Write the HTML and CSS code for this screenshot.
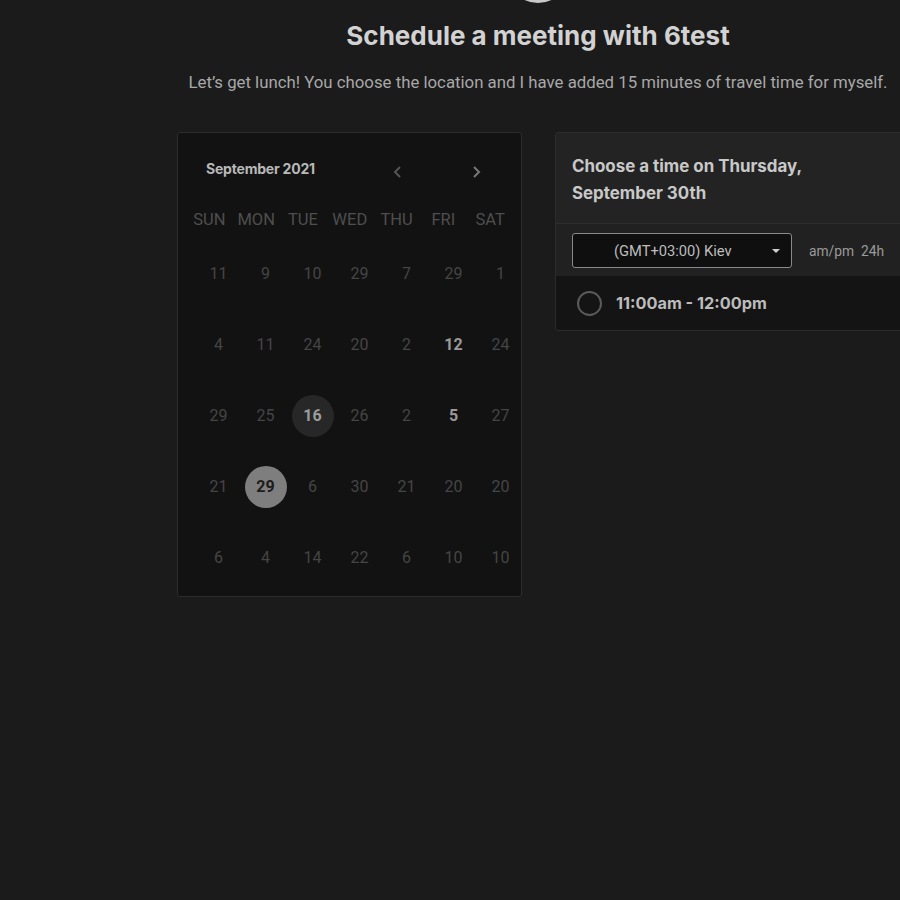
FILE: index.html
```html
<!DOCTYPE html>
<html lang="en">
<head>
<meta charset="utf-8">
<title>Schedule a meeting</title>
<link rel="stylesheet" href="styles.css">
</head>
<body>
<div class="page">
  <div class="avatar"></div>
  <h1 class="title">Schedule a meeting with 6test</h1>
  <p class="subtitle">Let’s get lunch! You choose the location and I have added 15 minutes of travel time for myself.</p>
  <div class="main">
    <div class="calendar">
      <div class="cal-head">
        <span class="month">September 2021</span>
        <div class="navs">
          <svg class="nav" width="12" height="16" viewBox="0 0 12 16"><path d="M8 3 L3 8 L8 13" fill="none" stroke="#555" stroke-width="2"/></svg>
          <svg class="nav" width="12" height="16" viewBox="0 0 12 16"><path d="M4 3 L9 8 L4 13" fill="none" stroke="#777" stroke-width="2"/></svg>
        </div>
      </div>
      <div class="weekdays">
        <span>SUN</span><span>MON</span><span>TUE</span><span>WED</span><span>THU</span><span>FRI</span><span>SAT</span>
      </div>
      <div class="days">
        <span class="d">11</span><span class="d">9</span><span class="d">10</span><span class="d">29</span><span class="d">7</span><span class="d">29</span><span class="d">1</span>
        <span class="d">4</span><span class="d">11</span><span class="d">24</span><span class="d">20</span><span class="d">2</span><span class="d"><b class="avail">12</b></span><span class="d">24</span>
        <span class="d">29</span><span class="d">25</span><span class="d"><b class="today">16</b></span><span class="d">26</span><span class="d">2</span><span class="d"><b class="avail">5</b></span><span class="d">27</span>
        <span class="d">21</span><span class="d"><b class="sel">29</b></span><span class="d">6</span><span class="d">30</span><span class="d">21</span><span class="d">20</span><span class="d">20</span>
        <span class="d">6</span><span class="d">4</span><span class="d">14</span><span class="d">22</span><span class="d">6</span><span class="d">10</span><span class="d">10</span>
      </div>
    </div>
    <div class="panel">
      <div class="panel-head">Choose a time on Thursday,<br>September 30th</div>
      <div class="options">
        <div class="select">
          <span class="tz">(GMT+03:00) Kiev</span>
          <span class="caret"></span>
        </div>
        <span class="fmt">am/pm&nbsp; 24h</span>
      </div>
      <div class="slot">
        <span class="radio"></span>
        <span class="slot-text">11:00am - 12:00pm</span>
      </div>
    </div>
  </div>
</div>
</body>
</html>
```
FILE: styles.css
```css
html, body {
  margin: 0;
  padding: 0;
  background: #1b1b1b;
  overflow: hidden;
  height: 900px;
}
.page {
  width: 722px;
  margin-left: 177px;
  display: flex;
  flex-direction: column;
  align-items: center;
}
.avatar {
  width: 62px;
  height: 62px;
  border-radius: 50%;
  background: #3a3a3a;
  border: 3px solid #c8c8c8;
  box-sizing: border-box;
  margin-top: -59px;
}
.title {
  margin: 17px 0 0;
  font-family: Inter, "Liberation Sans", sans-serif;
  font-weight: 700;
  font-size: 26px;
  line-height: 32px;
  color: #d2d2d2;
}
.subtitle {
  margin: 20px 0 0;
  font-family: Roboto, "Liberation Sans", sans-serif;
  font-size: 16.8px;
  line-height: 20px;
  color: #a8a8a8;
  white-space: nowrap;
}
.main {
  align-self: stretch;
  display: flex;
  gap: 33px;
  margin-top: 40px;
  align-items: flex-start;
}
.calendar {
  width: 345px;
  height: 465px;
  box-sizing: border-box;
  background: #121212;
  border: 1px solid #2c2c2c;
  border-radius: 3px;
  flex-shrink: 0;
  overflow: hidden;
}
.cal-head {
  display: flex;
  align-items: center;
  padding: 23px 0 0 28px;
  height: 24px;
}
.month {
  font-family: Inter, "Liberation Sans", sans-serif;
  font-weight: 700;
  font-size: 14px;
  color: #b8b8b8;
  letter-spacing: -0.2px;
}
.navs {
  display: flex;
  gap: 66px;
  margin-left: 77px;
  margin-top: 8px;
}
.weekdays {
  display: grid;
  grid-template-columns: repeat(7, 46.8px);
  margin: 29px 0 0 8px;
  font-family: Roboto, "Liberation Sans", sans-serif;
  font-size: 16.5px;
  color: #4e4e4e;
  text-align: center;
  line-height: 22px;
}
.days {
  display: grid;
  grid-template-columns: repeat(7, 47px);
  grid-auto-rows: 71px;
  margin: 32px 0 0 17px;
  font-family: Roboto, "Liberation Sans", sans-serif;
  font-size: 16px;
  color: #454545;
}
.d {
  display: flex;
  align-items: flex-start;
  justify-content: center;
  line-height: 22px;
}
.d b {
  display: flex;
  align-items: center;
  justify-content: center;
  width: 42px;
  height: 42px;
  margin-top: -10px;
  border-radius: 50%;
  font-weight: 700;
  flex-shrink: 0;
}
.avail {
  color: #9a9a9a;
}
.today {
  background: #272727;
  color: #9c9c9c;
}
.sel {
  background: #7e7e7e;
  color: #1c1c1c;
}
.panel {
  width: 360px;
  flex-shrink: 0;
  box-sizing: border-box;
  background: #212121;
  border: 1px solid #2c2c2c;
  border-radius: 3px;
  overflow: hidden;
}
.panel-head {
  background: #232323;
  padding: 20px 16px 16px;
  font-family: Inter, "Liberation Sans", sans-serif;
  font-weight: 700;
  font-size: 16.9px;
  line-height: 27px;
  color: #c8c8c8;
  border-bottom: 1px solid #2e2e2e;
}
.options {
  display: flex;
  align-items: center;
  padding: 9px 16px 8px;
  background: #212121;
}
.select {
  width: 220px;
  height: 35px;
  box-sizing: border-box;
  border: 1px solid #8a8a8a;
  border-radius: 3px;
  background: #0f0f0f;
  display: flex;
  align-items: center;
  position: relative;
}
.tz {
  margin-left: 41px;
  font-family: Roboto, "Liberation Sans", sans-serif;
  font-size: 14.7px;
  color: #bdbdbd;
}
.caret {
  position: absolute;
  right: 11px;
  top: 15px;
  width: 0;
  height: 0;
  border-left: 4px solid transparent;
  border-right: 4px solid transparent;
  border-top: 4px solid #d0d0d0;
}
.fmt {
  margin-left: 17px;
  font-family: Roboto, "Liberation Sans", sans-serif;
  font-size: 13.8px;
  color: #9a9a9a;
  white-space: nowrap;
}
.slot {
  display: flex;
  align-items: center;
  height: 54px;
  background: #141414;
  padding-left: 21px;
}
.radio {
  width: 21px;
  height: 21px;
  border: 2px solid #5a5a5a;
  border-radius: 50%;
  flex-shrink: 0;
}
.slot-text {
  margin-left: 14px;
  font-family: Inter, "Liberation Sans", sans-serif;
  font-weight: 700;
  font-size: 16.3px;
  color: #bcbcbc;
}
```
